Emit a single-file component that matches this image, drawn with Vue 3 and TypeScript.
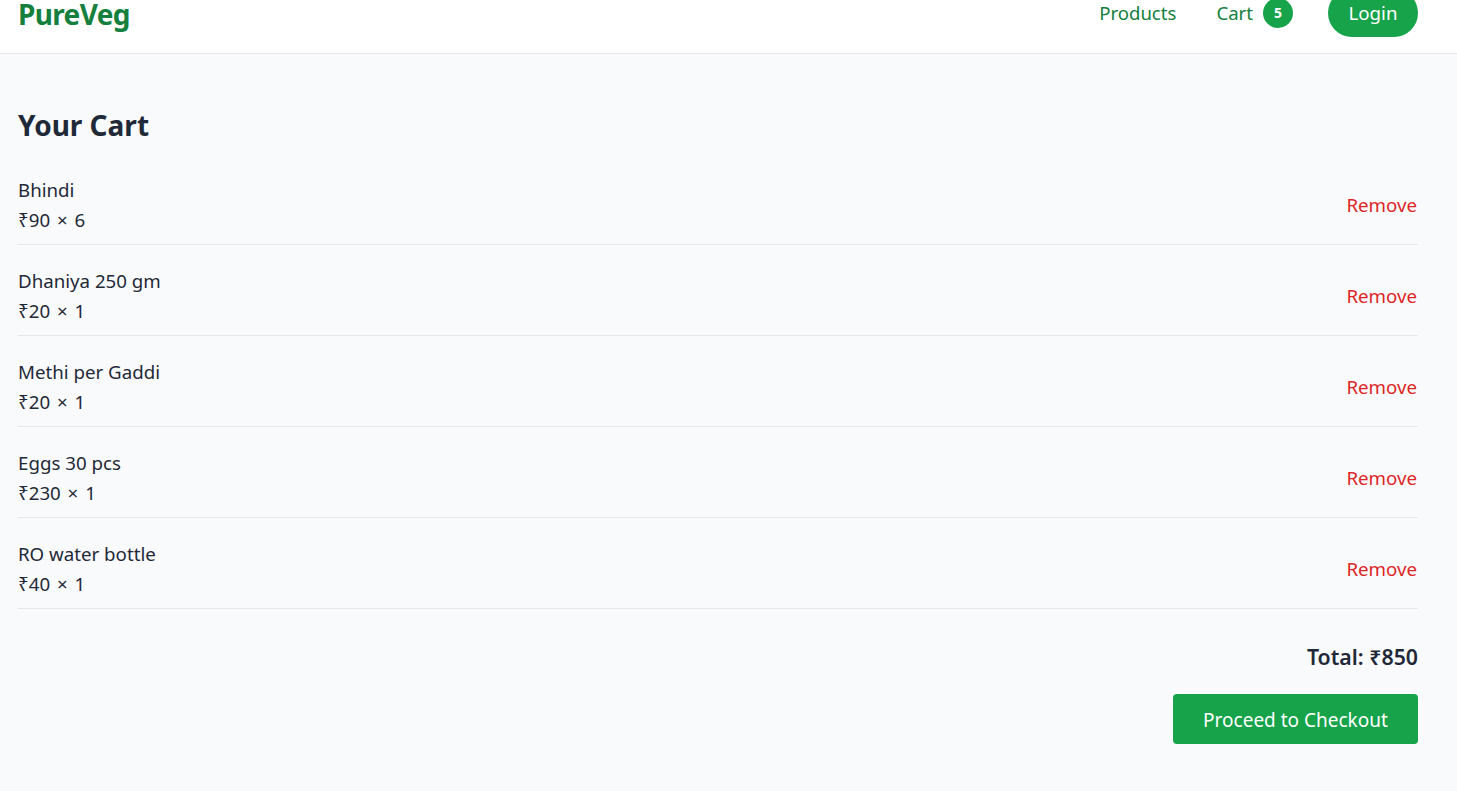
<script setup lang="ts">
interface Item { name: string; price: number; qty: number }
const items: Item[] = [
  { name: 'Bhindi', price: 90, qty: 6 },
  { name: 'Dhaniya 250 gm', price: 20, qty: 1 },
  { name: 'Methi per Gaddi', price: 20, qty: 1 },
  { name: 'Eggs 30 pcs', price: 230, qty: 1 },
  { name: 'RO water bottle', price: 40, qty: 1 },
]
</script>

<template>
  <div class="page">
    <header class="header">
      <span class="logo">PureVeg</span>
      <nav class="nav">
        <a class="link">Products</a>
        <a class="link cart">Cart <span class="badge">5</span></a>
        <button class="login">Login</button>
      </nav>
    </header>
    <main class="main">
      <h1 class="title">Your Cart</h1>
      <div v-for="item in items" :key="item.name" class="row">
        <div>
          <div class="line">{{ item.name }}</div>
          <div class="line price">₹{{ item.price }} × {{ item.qty }}</div>
        </div>
        <button class="remove">Remove</button>
      </div>
      <div class="total">Total: ₹850</div>
      <div class="actions"><button class="checkout">Proceed to Checkout</button></div>
    </main>
  </div>
</template>

<style>
html, body { margin: 0; height: 100%; overflow: hidden; background: #f9fafc; }
</style>

<style scoped>
.page {
  height: 791px;
  overflow: hidden;
  background: #f9fafc;
  color: #1f2937;
  font-family: "Noto Sans", "Open Sans", sans-serif;
  font-size: 18.7px;
}
.header {
  margin-top: -19px;
  height: 64px;
  display: flex;
  align-items: flex-start;
  justify-content: space-between;
  padding: 8px 39px 0 18px;
  background: #fff;
  border-bottom: 1px solid #e5e7eb;
}
.logo { font-size: 28px; font-weight: 700; color: #15803d; letter-spacing: -0.65px; line-height: 28px; margin-top: 11px; }
.nav { display: flex; align-items: center; }
.link { color: #15803d; line-height: 24px; font-size: 18.6px; }
.cart { margin-left: 40px; display: flex; align-items: center; gap: 10px; margin-top: -1px; }
.badge {
  width: 30px; height: 30px; border-radius: 50%;
  background: #16a34a; color: #fff; font-size: 14px; font-weight: 700;
  display: flex; align-items: center; justify-content: center;
}
.login {
  margin-left: 35px; width: 90px; height: 48px; border: 0; border-radius: 24px;
  background: #16a34a; color: #fff; font: inherit; padding: 0 0 2px;
}
.main { padding: 50px 39px 0 18px; }
.title { margin: -1px 0 28px; font-size: 28px; font-weight: 700; line-height: 44px; color: #1f2937; }
.row {
  display: flex; align-items: center; justify-content: space-between;
  padding-bottom: 9px; margin-bottom: 21px; border-bottom: 1px solid #e5e7eb;
}
.line { line-height: 30px; }
.price { word-spacing: 2px; }
.remove { border: 0; background: none; padding: 0 1px 0 0; margin-top: -2px; font: inherit; color: #dc2626; }
.total { margin-top: 33px; text-align: right; font-size: 21.3px; font-weight: 600; line-height: 30px; }
.actions { display: flex; justify-content: flex-end; margin-top: 22px; }
.checkout {
  width: 245px; height: 50px; border: 0; border-radius: 4px;
  background: #16a34a; color: #fff; font: inherit; font-size: 19px; padding: 2px 0 0;
}
</style>
